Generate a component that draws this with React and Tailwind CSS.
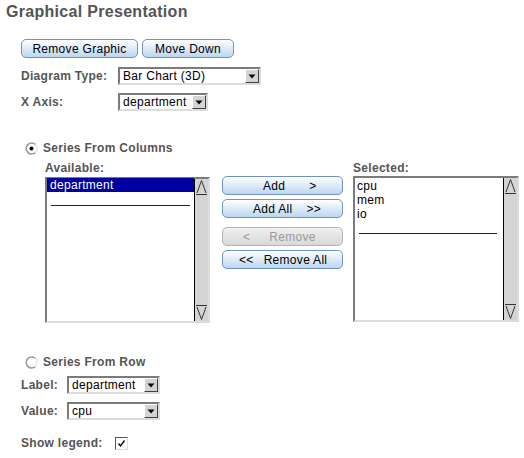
import React from 'react'

const Btn = ({ children, w, disabled, pl }) => (
  <div
    className={
      'h-[19px] flex items-center rounded-[5px] border text-[12px] tracking-[0.3px] ' +
      (pl === undefined ? 'justify-center ' : '') +
      (disabled
        ? 'border-[#b4b4b4] bg-gradient-to-b from-[#f0f0f0] to-[#d8d8d8] text-[#9a9a9a]'
        : 'border-[#6f93c4] bg-gradient-to-b from-[#ffffff] to-[#bcd6f0] text-black')
    }
    style={{ width: w, paddingLeft: pl }}
  >
    {children}
  </div>
)

const Select = ({ w, value }) => (
  <div
    className="h-[18px] flex border-2 border-t-[#7b7b7b] border-l-[#7b7b7b] border-b-[#dcdcdc] border-r-[#dcdcdc] bg-white"
    style={{ width: w }}
  >
    <div className="flex-1 pl-[3px] text-[12px] leading-[14px] tracking-[0.3px] text-black">{value}</div>
    <div className="w-[14px] h-[14px] bg-[#d4d4d4] border border-t-white border-l-white border-b-[#404040] border-r-[#404040] flex items-center justify-center">
      <svg width="8" height="5" viewBox="0 0 8 5">
        <path d="M0.5 0.5 L7.5 0.5 L4 4.5 Z" fill="#000" />
      </svg>
    </div>
  </div>
)

const Radio = ({ checked }) => (
  <svg width="13" height="13" viewBox="0 0 13 13">
    <path d="M10.5 2.5 A5.5 5.5 0 1 0 10.5 10.5" fill="none" stroke="#9a9a9a" strokeWidth="1.6" />
    <path d="M10.5 10.5 A5.5 5.5 0 0 0 10.5 2.5" fill="none" stroke="#e8e8e8" strokeWidth="1.6" />
    {checked && <circle cx="6.5" cy="6.5" r="2" fill="#000" />}
  </svg>
)

const ScrollBar = () => (
  <div className="w-[14px] h-full bg-[#d4d4d4] border-l border-black flex flex-col justify-between">
    <svg width="13" height="16" viewBox="0 0 13 16">
      <path d="M2 14 L6.5 1.5 L11 14" fill="none" stroke="#333" strokeWidth="1" />
      <path d="M1 15.5 L12 15.5" stroke="#333" />
    </svg>
    <svg width="13" height="16" viewBox="0 0 13 16">
      <path d="M1 0.5 L12 0.5" stroke="#333" />
      <path d="M2 2 L6.5 14.5 L11 2" fill="none" stroke="#333" strokeWidth="1" />
    </svg>
  </div>
)

const ListBox = ({ w, children }) => (
  <div
    className="h-[146px] flex border-2 border-t-[#7b7b7b] border-l-[#7b7b7b] border-b-[#dcdcdc] border-r-[#dcdcdc] bg-white"
    style={{ width: w }}
  >
    <div className="flex-1">{children}</div>
    <ScrollBar />
  </div>
)

const Label = ({ children, w }) => (
  <div className="text-[12px] font-bold text-[#555] tracking-[0.3px]" style={{ width: w }}>
    {children}
  </div>
)

export default function App() {
  return (
    <div className="w-[524px] h-[458px] bg-white overflow-hidden font-['Liberation_Sans',Arial,sans-serif]">
      <div className="pl-[6px] pt-[1px] text-[16px] leading-[22px] font-bold text-[#555] tracking-[0.3px]">
        Graphical Presentation
      </div>

      <div className="ml-[21px] mt-[16px] flex gap-[4px]">
        <Btn w={117}>Remove Graphic</Btn>
        <Btn w={92}>Move Down</Btn>
      </div>

      <div className="ml-[21px] mt-[9px] flex items-center">
        <Label w={97}>Diagram Type:</Label>
        <Select w={143} value="Bar Chart (3D)" />
      </div>
      <div className="ml-[21px] mt-[8px] flex items-center">
        <Label w={97}>X Axis:</Label>
        <Select w={90} value="department" />
      </div>

      <div className="ml-[25px] mt-[30px] flex items-center gap-[5px] h-[14px]">
        <Radio checked />
        <Label>Series From Columns</Label>
      </div>

      <div className="ml-[45px] mt-[7px] flex">
        <div className="flex flex-col">
          <div className="h-[15px] leading-[13px]"><Label>Available:</Label></div>
          <ListBox w={165}>
            <div className="mt-[-1px] h-[14px] bg-[#0000a0] text-white text-[12px] leading-[14px] pl-[3px] tracking-[0.3px]">
              department
            </div>
            <div className="ml-[4px] mr-[4px] mt-[13px] h-px bg-[#222]" />
          </ListBox>
        </div>

        <div className="ml-[12px] mt-[14px] flex flex-col">
          <Btn w={121} pl={40}>
            <span>Add</span>
            <span className="ml-[24px]">&gt;</span>
          </Btn>
          <div className="mt-[4px]">
            <Btn w={121} pl={30}>
              <span>Add All</span>
              <span className="ml-[14px]">&gt;&gt;</span>
            </Btn>
          </div>
          <div className="mt-[9px]">
            <Btn w={121} pl={20} disabled>
              <span>&lt;</span>
              <span className="ml-[19px]">Remove</span>
            </Btn>
          </div>
          <div className="mt-[4px]">
            <Btn w={121} pl={16}>
              <span>&lt;&lt;</span>
              <span className="ml-[10px]">Remove All</span>
            </Btn>
          </div>
        </div>

        <div className="ml-[10px] flex flex-col">
          <div className="h-[14px] leading-[13px]"><Label>Selected:</Label></div>
          <ListBox w={166}>
            <div className="pl-[2px] pt-[1px] text-[12px] leading-[14px] tracking-[0.3px] text-black">
              <div>cpu</div>
              <div>mem</div>
              <div>io</div>
            </div>
            <div className="ml-[4px] mr-[6px] mt-[12px] h-px bg-[#222]" />
          </ListBox>
        </div>
      </div>

      <div className="ml-[25px] mt-[32px] flex items-center gap-[5px] h-[14px]">
        <Radio />
        <Label>Series From Row</Label>
      </div>

      <div className="ml-[21px] mt-[7px] flex items-center">
        <Label w={46}>Label:</Label>
        <Select w={93} value="department" />
      </div>
      <div className="ml-[21px] mt-[8px] flex items-center">
        <Label w={46}>Value:</Label>
        <Select w={93} value="cpu" />
      </div>

      <div className="ml-[21px] mt-[14px] flex items-center">
        <Label w={94}>Show legend:</Label>
        <div className="w-[13px] h-[13px] bg-white border border-t-[#555] border-l-[#555] border-b-[#ddd] border-r-[#ddd] flex items-center justify-center">
          <svg width="9" height="9" viewBox="0 0 9 9">
            <path d="M1.5 4.5 L3.5 7 L7.5 1.5" fill="none" stroke="#000" strokeWidth="1.3" />
          </svg>
        </div>
      </div>
    </div>
  )
}
